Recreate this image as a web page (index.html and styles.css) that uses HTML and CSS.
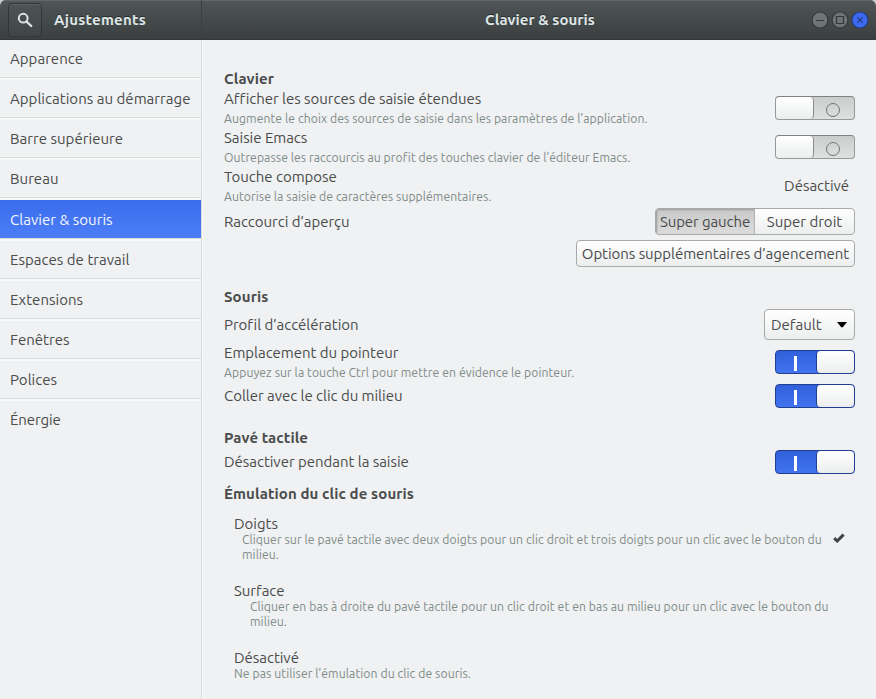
FILE: index.html
```html
<!DOCTYPE html>
<html lang="fr">
<head>
<meta charset="utf-8">
<title>Ajustements</title>
<link rel="stylesheet" href="styles.css">
</head>
<body>
<div class="window">
  <header class="titlebar">
    <div class="titlebar-side">
      <button class="search" aria-label="Rechercher"><svg width="16" height="16" viewBox="0 0 16 16"><circle cx="6.2" cy="6.2" r="4.4" fill="none" stroke="currentColor" stroke-width="2"/><path d="M9.5 9.5L14.2 14" stroke="currentColor" stroke-width="2.4" stroke-linecap="round"/></svg></button>
      <span class="app-title">Ajustements</span>
    </div>
    <div class="titlebar-main">
      <span class="page-title">Clavier &amp; souris</span>
      <div class="controls">
        <svg class="control" viewBox="0 0 18 18"><circle cx="9" cy="9" r="8"/><path d="M5 9.5h8"/></svg>
        <svg class="control" viewBox="0 0 18 18"><circle cx="9" cy="9" r="8"/><path d="M5.5 5.5h7v7h-7z"/></svg>
        <svg class="control close" viewBox="0 0 18 18"><circle cx="9" cy="9" r="8"/><path d="M6.3 6.3l5.4 5.4M11.7 6.3l-5.4 5.4"/></svg>
      </div>
    </div>
  </header>
  <div class="body">
    <nav class="sidebar">
      <a class="item first">Apparence</a>
      <a class="item">Applications au démarrage</a>
      <a class="item">Barre supérieure</a>
      <a class="item">Bureau</a>
      <a class="item selected">Clavier &amp; souris</a>
      <a class="item">Espaces de travail</a>
      <a class="item">Extensions</a>
      <a class="item">Fenêtres</a>
      <a class="item">Polices</a>
      <a class="item last">Énergie</a>
    </nav>
    <main class="panel">
      <section class="keyboard">
        <h2>Clavier</h2>
        <div class="row"><div><div class="label">Afficher les sources de saisie étendues</div><div class="hint">Augmente le choix des sources de saisie dans les paramètres de l’application.</div></div><div class="switch"><i></i></div></div>
        <div class="row"><div><div class="label">Saisie Emacs</div><div class="hint">Outrepasse les raccourcis au profit des touches clavier de l’éditeur Emacs.</div></div><div class="switch"><i></i></div></div>
        <div class="row"><div><div class="label">Touche compose</div><div class="hint">Autorise la saisie de caractères supplémentaires.</div></div><span class="label value">Désactivé</span></div>
        <div class="row overview"><span class="label">Raccourci d’aperçu</span><div class="segmented"><button class="active">Super gauche</button><button>Super droit</button></div></div>
        <div class="row options"><button class="button">Options supplémentaires d’agencement</button></div>
      </section>
      <section class="mouse">
        <h2>Souris</h2>
        <div class="row profile"><span class="label">Profil d’accélération</span><button class="button combo">Default<svg width="10" height="6" viewBox="0 0 10 6"><path d="M0 0h10L5.8 5.2H4.2z"/></svg></button></div>
        <div class="row"><div><div class="label">Emplacement du pointeur</div><div class="hint">Appuyez sur la touche Ctrl pour mettre en évidence le pointeur.</div></div><div class="switch on"><i></i></div></div>
        <div class="row paste"><span class="label">Coller avec le clic du milieu</span><div class="switch on"><i></i></div></div>
      </section>
      <section class="touchpad">
        <h2>Pavé tactile</h2>
        <div class="row typing"><span class="label">Désactiver pendant la saisie</span><div class="switch on"><i></i></div></div>
      </section>
      <section class="emulation">
        <h2>Émulation du clic de souris</h2>
        <div class="choice fingers"><div class="label">Doigts</div><div class="hint">Cliquer sur le pavé tactile avec deux doigts pour un clic droit et trois doigts pour un clic avec le bouton du<br>milieu.</div><svg class="check" width="12" height="10" viewBox="0 0 12 10"><path d="M1.2 5.2L4.2 8L10.6 1.6" fill="none" stroke="#404343" stroke-width="3"/></svg></div>
        <div class="choice area"><div class="label">Surface</div><div class="hint">Cliquer en bas à droite du pavé tactile pour un clic droit et en bas au milieu pour un clic avec le bouton du<br>milieu.</div></div>
        <div class="choice"><div class="label">Désactivé</div><div class="hint">Ne pas utiliser l’émulation du clic de souris.</div></div>
      </section>
    </main>
  </div>
</div>
</body>
</html>
```
FILE: styles.css
```css
* { box-sizing: border-box; }
body { margin: 0; background: #c9cccd; color: #4a4c4c; font: 15px/20px Ubuntu, "Noto Sans", sans-serif; white-space: nowrap; }
button { margin: 0; padding: 0; font: inherit; color: inherit; }
.window { width: 876px; height: 699px; display: flex; flex-direction: column; overflow: hidden; border-radius: 6px 6px 0 0; background: #eff1f2; }
.titlebar { height: 40px; flex: none; display: flex; color: #dde6e6; font-weight: 700; background: linear-gradient(#4f5657, #3b3e3e); box-shadow: inset 0 1px #626868, inset 0 -1px #343737; text-shadow: 0 -1px #292c2c; }
.titlebar-side { width: 202px; display: flex; align-items: center; border-right: 1px solid #3b4040; }
.search { width: 34px; height: 34px; margin-left: 8px; display: grid; place-items: center; border: 1px solid #303535; border-radius: 4px; background: linear-gradient(#4d5455, #414545); box-shadow: inset 0 1px #5c6363; color: #dce4e4; }
.app-title { margin-left: 12px; letter-spacing: .25px; }
.titlebar-main { flex: 1; display: flex; align-items: center; }
.page-title { margin-left: 283px; letter-spacing: .05px; }
.controls { display: flex; gap: 2px; margin-left: auto; margin-right: 7px; }
.control { width: 18px; height: 18px; fill: #6f7576; stroke: #333838; stroke-width: 1.2; }
.close { fill: #3c69ed; stroke: #243c7c; }
.body { flex: 1; display: flex; min-height: 0; }
.sidebar { width: 202px; flex: none; border-right: 1px solid #d7d9da; }
.item { display: flex; align-items: center; height: 40px; padding: 3px 0 0 10px; border-bottom: 1px solid #d9dbdc; box-shadow: inset 0 2px #f7f8f8; letter-spacing: .03px; }
.item.first { height: 38px; padding-top: 1px; box-shadow: none; }
.item.selected { height: 41px; padding-top: 1px; color: #f4f7ff; border-top: 2px solid #f7f8f8; border-bottom-color: #d9dbdc; background: linear-gradient(#3a6bea, #4d7ef8); background-clip: padding-box; box-shadow: none; }
.item.last { padding-top: 2px; border-bottom: 0; letter-spacing: -.1px; }
.panel { flex: 1; border-left: 1px solid #f8f9f9; padding: 29px 21px 0 21px; }
h2 { margin: 0; font-size: 15px; line-height: 20px; letter-spacing: .1px; }
.label { letter-spacing: -.03px; }
.hint { color: #7f8c89; font-size: 12.2px; line-height: 18px; letter-spacing: .07px; }
.row { display: flex; align-items: center; justify-content: space-between; height: 39px; padding-bottom: 1px; }
.row .hint { margin: 1px 0 -1px; }
.value { margin-right: 6px; }
.overview { height: 32px; }
.overview .label { padding-top: 1px; }
.options { height: 31px; padding-bottom: 0; justify-content: flex-end; }
.button, .segmented { height: 27px; border: 1px solid #a8aaaa; border-radius: 4px; background: linear-gradient(#fff, #eceeee); }
.button { width: 279px; }
.options .button { letter-spacing: -.05px; }
.segmented { width: 200px; display: flex; overflow: hidden; }
.segmented button { flex: 1; border: 0; background: none; }
.segmented .active { flex: 0 0 99px; border-right: 1px solid #b2b2b2; letter-spacing: -.1px; background: linear-gradient(#c8c8c8, #dcdcdc); box-shadow: inset 1px 1px 2px #999; }
.mouse { margin-top: 18px; }
.profile { height: 36px; }
.combo { width: 91px; height: 31px; display: flex; align-items: center; justify-content: space-between; padding: 0 7px 0 6px; }
.paste { height: 28px; padding-bottom: 0; }
.switch { width: 80px; height: 24px; position: relative; display: flex; border: 1px solid #979999; border-top-color: #808282; border-radius: 4px; background: linear-gradient(#cbcccc, #dedfdf); }
.switch i { width: 38px; height: 22px; border-right: 1px solid #8b8d8d; border-radius: 4px; background: linear-gradient(#fff, #eceeee); }
.switch::after { content: ""; position: absolute; right: 14px; top: 6px; width: 12px; height: 12px; border: 1px solid #6b7877; border-radius: 50%; }
.switch.on { justify-content: flex-end; border-color: #223e91; background: linear-gradient(#3160da, #4274f0); }
.switch.on i { border-right: 0; border-left: 1px solid #223e91; }
.switch.on::after { left: 18px; right: auto; top: 5px; width: 3px; height: 15px; border: 0; border-radius: 0; background: #fff; }
.touchpad { margin-top: 18px; }
.typing { height: 28px; padding-bottom: 0; }
.emulation { margin-top: 8px; }
.choice { position: relative; height: 67px; padding-left: 10px; }
.fingers { margin-top: 12px; }
.choice .label { line-height: 16px; }
.choice .hint { line-height: 15px; letter-spacing: .08px; }
.fingers .hint { margin-left: 8px; }
.area .hint { margin-left: 16px; }
.check { position: absolute; right: 10px; top: 17px; }
```
